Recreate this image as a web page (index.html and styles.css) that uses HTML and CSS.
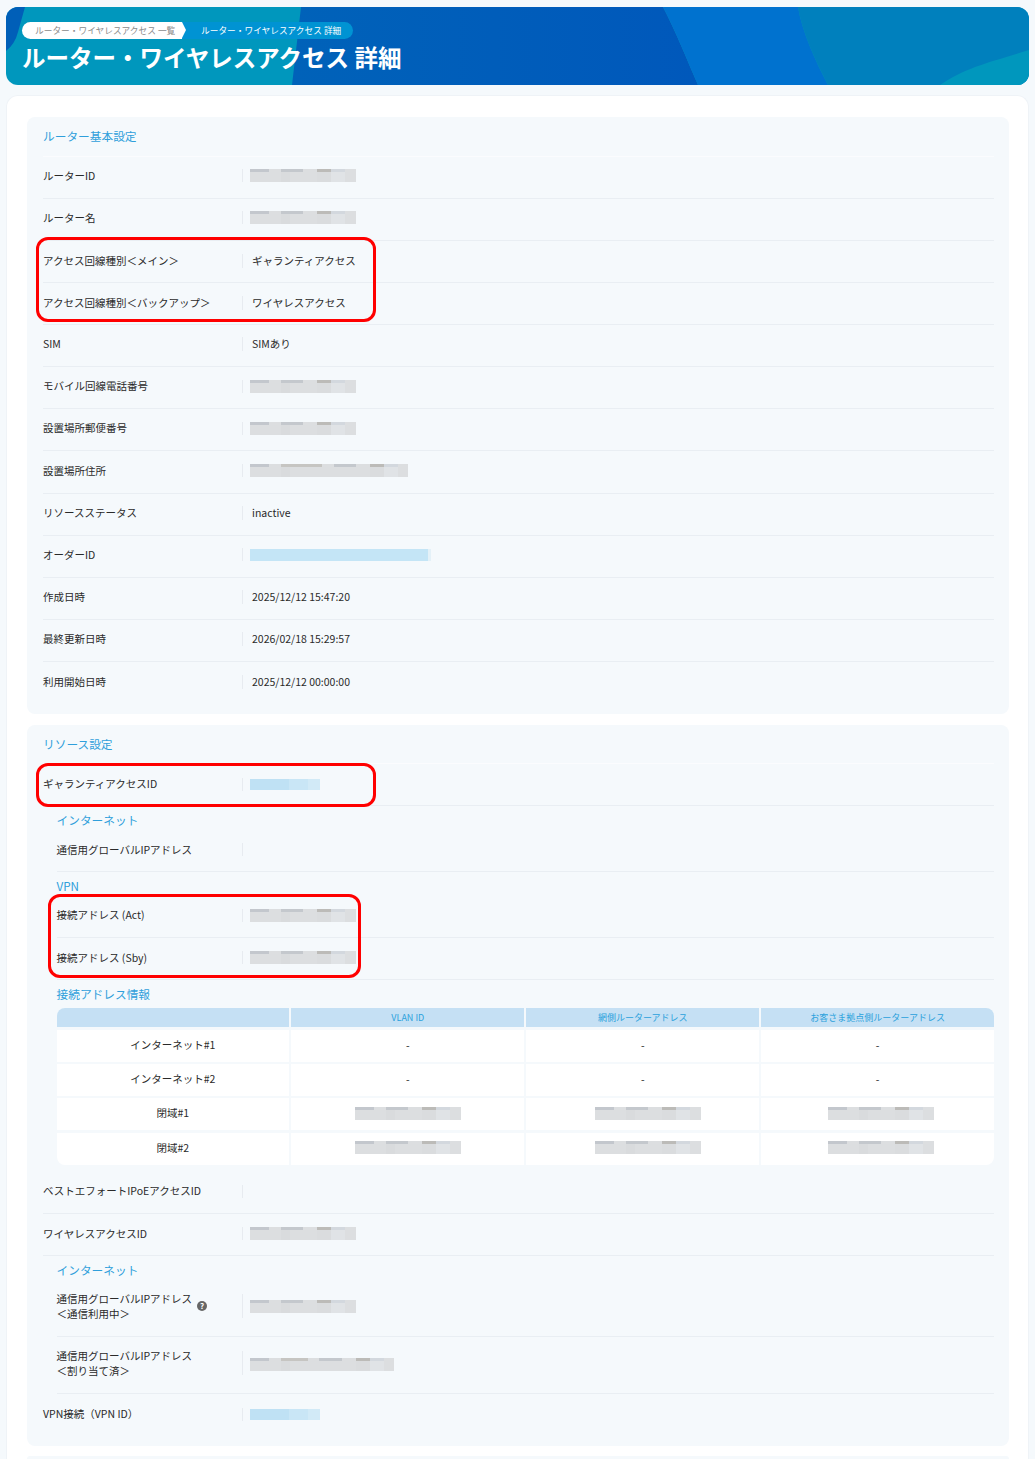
FILE: index.html
```html
<!DOCTYPE html>
<html lang="ja">
<head>
<meta charset="utf-8">
<title>ルーター・ワイヤレスアクセス 詳細</title>
<link rel="stylesheet" href="styles.css">
</head>
<body>
<header class="hero">
  <svg class="hero-art" viewBox="0 0 1023 78" preserveAspectRatio="none" aria-hidden="true">
    <defs>
      <linearGradient id="deep" x1="0" x2="1" y1="0" y2="0">
        <stop offset="0" stop-color="#0062b9"/>
        <stop offset="1" stop-color="#0058bb"/>
      </linearGradient>
    </defs>
    <rect width="1023" height="78" fill="#0097bd"/>
    <path d="M0 0H19L12 25Q9 37 0 44Z" fill="#005fb8"/>
    <path d="M295 0H657C670 25 682 55 692 78H286Z" fill="url(#deep)"/>
    <path d="M657 0H792C796 25 810 55 822 78H692C682 55 670 25 657 0Z" fill="#0072cf"/>
    <path d="M792 0H1023V78H822C810 55 796 25 792 0Z" fill="#0080bd"/>
    <path d="M934 78C960 60 985 55 1023 43V78Z" fill="#0097bd"/>
  </svg>
  <nav class="crumbs">
    <span class="crumb crumb-current">ルーター・ワイヤレスアクセス 詳細</span>
    <span class="crumb crumb-parent">ルーター・ワイヤレスアクセス 一覧</span>
  </nav>
  <h1 class="hero-title">ルーター・ワイヤレスアクセス 詳細</h1>
</header>

<main class="card">
  <section class="panel">
    <h2 class="panel-title">ルーター基本設定</h2>
    <div class="row"><div class="label">ルーターID</div><div class="value"><i class="mask"></i></div></div>
    <div class="row"><div class="label">ルーター名</div><div class="value"><i class="mask"></i></div></div>
    <div class="marked marked-shift">
      <div class="row"><div class="label">アクセス回線種別＜メイン＞</div><div class="value">ギャランティアクセス</div></div>
      <div class="row"><div class="label">アクセス回線種別＜バックアップ＞</div><div class="value">ワイヤレスアクセス</div></div>
      <div class="ring ring-a"></div>
    </div>
    <div class="row"><div class="label">SIM</div><div class="value">SIMあり</div></div>
    <div class="row"><div class="label">モバイル回線電話番号</div><div class="value"><i class="mask"></i></div></div>
    <div class="row"><div class="label">設置場所郵便番号</div><div class="value"><i class="mask"></i></div></div>
    <div class="row"><div class="label">設置場所住所</div><div class="value"><i class="mask mask-long"></i></div></div>
    <div class="row"><div class="label">リソースステータス</div><div class="value">inactive</div></div>
    <div class="row"><div class="label">オーダーID</div><div class="value"><i class="mask-link mask-link-long"></i></div></div>
    <div class="row"><div class="label">作成日時</div><div class="value">2025/12/12 15:47:20</div></div>
    <div class="row"><div class="label">最終更新日時</div><div class="value">2026/02/18 15:29:57</div></div>
    <div class="row row-last"><div class="label">利用開始日時</div><div class="value">2025/12/12 00:00:00</div></div>
  </section>

  <section class="panel panel-resources">
    <h2 class="panel-title">リソース設定</h2>
    <div class="marked">
      <div class="row"><div class="label">ギャランティアクセスID</div><div class="value"><i class="mask-link"></i></div></div>
      <div class="ring ring-b"></div>
    </div>
    <div class="sub">
      <h3 class="sub-title">インターネット</h3>
      <div class="row"><div class="label">通信用グローバルIPアドレス</div><div class="value"></div></div>
      <h3 class="sub-title">VPN</h3>
      <div class="marked">
        <div class="row"><div class="label">接続アドレス (Act)</div><div class="value"><i class="mask"></i></div></div>
        <div class="row"><div class="label">接続アドレス (Sby)</div><div class="value"><i class="mask"></i></div></div>
        <div class="ring ring-c"></div>
      </div>
      <h3 class="sub-title sub-title-table">接続アドレス情報</h3>
      <div class="addr-table">
        <div class="th th-first"></div>
        <div class="th">VLAN ID</div>
        <div class="th">網側ルーターアドレス</div>
        <div class="th th-last">お客さま拠点側ルーターアドレス</div>
        <div class="td">インターネット#1</div><div class="td">-</div><div class="td">-</div><div class="td">-</div>
        <div class="td">インターネット#2</div><div class="td">-</div><div class="td">-</div><div class="td">-</div>
        <div class="td">閉域#1</div><div class="td"><i class="mask"></i></div><div class="td"><i class="mask mask-c3"></i></div><div class="td"><i class="mask mask-c4"></i></div>
        <div class="td td-bl">閉域#2</div><div class="td"><i class="mask"></i></div><div class="td"><i class="mask mask-c3"></i></div><div class="td td-br"><i class="mask mask-c4"></i></div>
      </div>
    </div>
    <div class="row row-after-table"><div class="label">ベストエフォートIPoEアクセスID</div><div class="value"></div></div>
    <div class="row"><div class="label">ワイヤレスアクセスID</div><div class="value"><i class="mask"></i></div></div>
    <div class="sub">
      <h3 class="sub-title">インターネット</h3>
      <div class="row row-tall">
        <div class="label label-help"><span>通信用グローバルIPアドレス<br>＜通信利用中＞</span><span class="help">?</span></div>
        <div class="value"><i class="mask"></i></div>
      </div>
      <div class="row row-tall">
        <div class="label"><span>通信用グローバルIPアドレス<br>＜割り当て済＞</span></div>
        <div class="value"><i class="mask mask-mid"></i></div>
      </div>
    </div>
    <div class="row row-last"><div class="label">VPN接続（VPN ID）</div><div class="value"><i class="mask-link"></i></div></div>
  </section>

  <section class="panel panel-next"></section>
</main>
</body>
</html>
```

FILE: styles.css
```css
* { box-sizing: border-box; }

html, body {
  height: 1459px;
  overflow: hidden;
}

body {
  margin: 0;
  padding: 7px 6px 0;
  background: #f5f9fc;
  color: #2a2a2a;
  font-family: "Noto Sans CJK JP", "Noto Sans", sans-serif;
  font-size: 10.5px;
  line-height: 14px;
}

.hero {
  position: relative;
  height: 78px;
  padding: 15px 16px 0;
  border-radius: 12px;
  overflow: hidden;
  color: #fff;
}

.hero-art {
  position: absolute;
  inset: 0;
  width: 100%;
  height: 100%;
}

.crumbs {
  position: relative;
  display: flex;
  flex-direction: row-reverse;
  justify-content: flex-end;
  height: 17px;
}

.crumb {
  display: flex;
  align-items: center;
  height: 17px;
  font-size: 8.7px;
  line-height: 17px;
  white-space: nowrap;
}

.crumb-parent {
  position: relative;
  z-index: 1;
  width: 160px;
  padding-left: 13px;
  background: #fff;
  color: #8a8a8a;
  border-radius: 8.5px 0 0 8.5px;
}

.crumb-parent::after {
  content: "";
  position: absolute;
  left: 100%;
  top: 0;
  border-left: 4px solid #fff;
  border-top: 8.5px solid transparent;
  border-bottom: 8.5px solid transparent;
}

.crumb-current {
  width: 172px;
  margin-left: -1px;
  padding-left: 20px;
  background: #0093d3;
  border-radius: 0 8.5px 8.5px 0;
}

.hero-title {
  position: relative;
  margin: 1px 0 0;
  font-size: 23.5px;
  line-height: 34px;
  font-weight: 700;
  white-space: nowrap;
}

.card {
  height: 1364px;
  margin-top: 10px;
  padding: 21px 19px 0 20px;
  background: #fff;
  border: 1px solid #eff3f7;
  border-bottom: 0;
  border-radius: 12px 12px 0 0;
  overflow: hidden;
}

.panel {
  margin-bottom: 10.5px;
  padding: 0 15px 10px 16px;
  background: #f5f9fc;
  border-radius: 8px;
}

.panel-next {
  height: 3px;
  margin-bottom: 0;
  padding: 0;
  border-radius: 8px 8px 0 0;
}

.panel-title {
  margin: 0;
  height: 39.5px;
  border-bottom: 1px solid #fbfcfe;
  color: #2f9fdb;
  font-size: 11.7px;
  font-weight: 400;
  line-height: 37px;
}

.row {
  display: grid;
  grid-template-columns: 199px 1fr;
  align-items: center;
  height: 42.15px;
  padding-bottom: 3px;
  border-bottom: 1px solid #e9eef3;
}

.panel-resources .row,
.marked-shift .row {
  padding-bottom: 1.5px;
}

.row-last {
  border-bottom: 0;
}

.panel-resources .row-tall {
  height: 57.2px;
  padding-bottom: 3px;
  line-height: 15px;
}

.row-after-table {
  margin-top: 7px;
}

.value {
  position: relative;
  display: flex;
  align-items: center;
  min-height: 13px;
  padding-left: 10px;
}

.value::before {
  content: "";
  position: absolute;
  left: 0;
  top: 0;
  bottom: 0;
  width: 1px;
  background: #e7ebf0;
}

.row-tall .value {
  min-height: 24px;
}

.row-tall .mask {
  margin-top: 2px;
}

.value .mask,
.value .mask-link {
  margin-left: -2px;
}

.label-help {
  display: flex;
  align-items: center;
  gap: 5px;
}

.help {
  display: block;
  width: 10px;
  height: 10px;
  border-radius: 50%;
  background: #666;
  color: #fff;
  font-size: 8px;
  font-weight: 700;
  line-height: 10px;
  text-align: center;
}

.mask {
  display: block;
  width: 106px;
  height: 13px;
  background:
    linear-gradient(90deg, #c3c7cd 0 19px, transparent 19px 31px, #c4c8cd 31px 53px, transparent 53px 67px, #bcbbb8 67px 81px, #d3d8de 81px 95px, transparent 95px) top left / 100% 3px no-repeat,
    linear-gradient(90deg, #dcdee0 0 31px, #d9dbdd 31px 40px, #dcdee0 40px 67px, #dadcde 67px 81px, #e0e3e6 81px 95px, #dcdee0 95px);
}

.mask-c3 {
  margin-left: 10px;
}

.mask-c4 {
  margin-left: 7px;
}

.mask-long {
  width: 158px;
  background:
    linear-gradient(90deg, #c3c7cd 0 19px, transparent 19px 31px, #c6c5c2 31px 72px, transparent 72px 84px, #c4c8cd 84px 106px, transparent 106px 120px, #bcbbb8 120px 134px, #d3d8de 134px 148px, transparent 148px) top left / 100% 3px no-repeat,
    linear-gradient(90deg, #dcdee0 0 31px, #d9dbdd 31px 40px, #dcdee0 40px 120px, #dadcde 120px 134px, #e0e3e6 134px 148px, #dcdee0 148px);
}

.mask-mid {
  width: 144px;
  background:
    linear-gradient(90deg, #c3c7cd 0 19px, transparent 19px 31px, #c6c5c2 31px 58px, transparent 58px 69px, #c4c8cd 69px 92px, transparent 92px 106px, #bcbbb8 106px 120px, #d3d8de 120px 134px, transparent 134px) top left / 100% 3px no-repeat,
    linear-gradient(90deg, #dcdee0 0 31px, #d9dbdd 31px 40px, #dcdee0 40px 106px, #dadcde 106px 120px, #e0e3e6 120px 134px, #dcdee0 134px);
}

.mask-link {
  display: block;
  width: 70px;
  height: 11px;
  background: linear-gradient(90deg, #bfe1f4 0 39px, #c9e6f6 39px 58px, #d2eaf7 58px);
}

.mask-link-long {
  width: 181px;
  height: 12px;
  background: linear-gradient(90deg, #c4e5f6 0 178px, #e4f1f8 178px);
}

.marked {
  position: relative;
}

.ring {
  position: absolute;
  border: 3.5px solid #f00;
  border-radius: 12px;
  pointer-events: none;
}

.ring-a {
  left: -7px;
  top: -3.5px;
  width: 340px;
  height: 85px;
}

.ring-b {
  left: -7px;
  top: -1px;
  width: 340px;
  height: 44px;
}

.ring-c {
  left: -9px;
  top: -1.5px;
  width: 313px;
  height: 84px;
}

.sub {
  margin-left: 13.5px;
}

.sub .row {
  grid-template-columns: 185.5px 1fr;
}

.sub-title {
  margin: 0;
  height: 23.5px;
  color: #2f9fdb;
  font-size: 11.7px;
  font-weight: 400;
  line-height: 27px;
}

.sub-title-table {
  height: 28.5px;
  line-height: 28px;
}

.addr-table {
  display: grid;
  grid-template-columns: repeat(4, 1fr);
  grid-template-rows: 19px repeat(4, 32px);
  gap: 2.3px;
}

.th {
  display: flex;
  align-items: center;
  justify-content: center;
  padding-top: 1px;
  background: #c5e0f4;
  color: #2ba0dc;
  font-size: 9px;
  line-height: 12px;
}

.th-first { border-top-left-radius: 8px; }
.th-last { border-top-right-radius: 8px; }

.td {
  display: flex;
  align-items: center;
  justify-content: center;
  padding-bottom: 2px;
  background: #fff;
}

.td-bl { border-bottom-left-radius: 8px; }
.td-br { border-bottom-right-radius: 8px; }
```
